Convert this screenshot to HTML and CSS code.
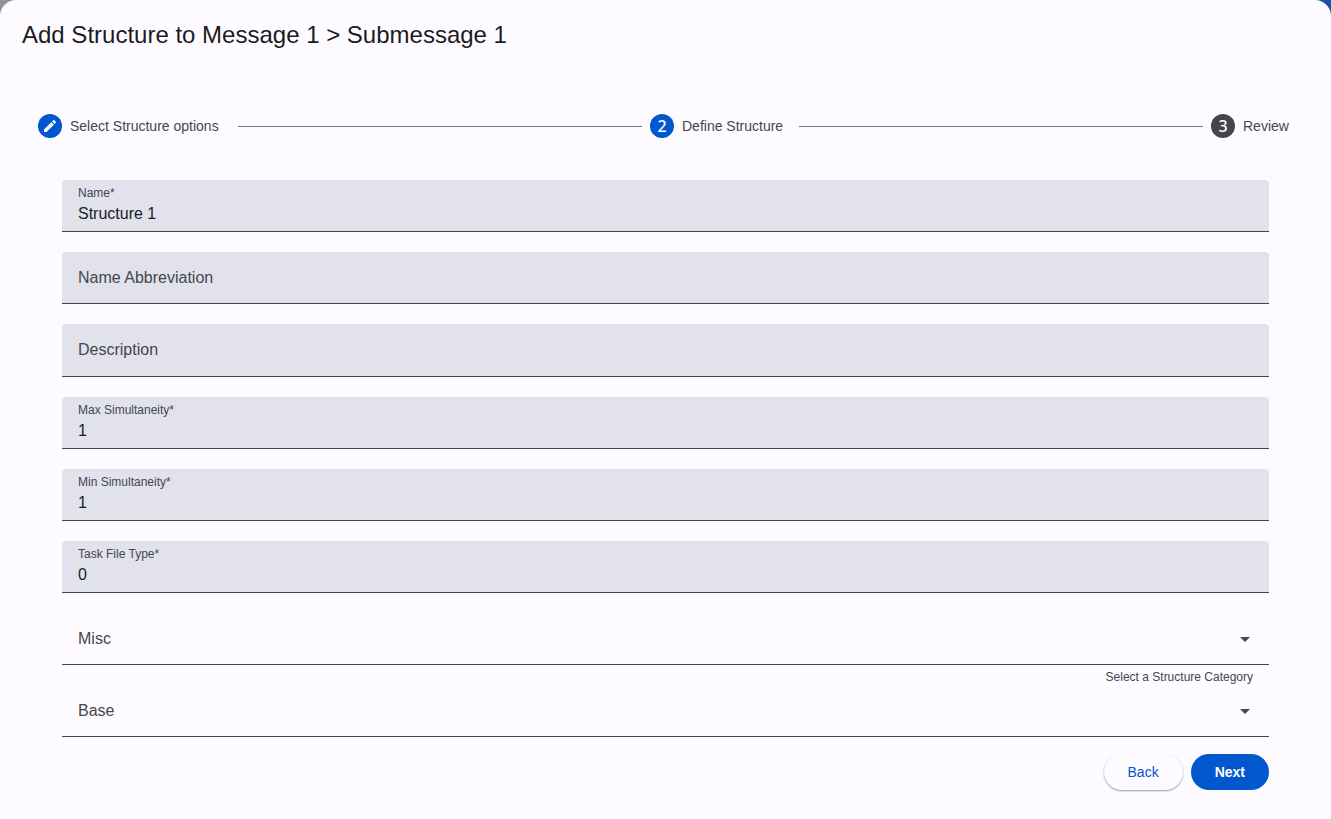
FILE: index.html
```html
<!DOCTYPE html>
<html lang="en">
<head>
  <meta charset="utf-8">
  <title>Add Structure</title>
  <link rel="stylesheet" href="styles.css">
</head>
<body>
  <main class="dialog">
    <h1 class="dialog-title">Add Structure to Message 1 &gt; Submessage 1</h1>

    <ol class="stepper">
      <li class="step">
        <span class="step-icon">
          <svg viewBox="0 0 24 24" width="16" height="16" aria-hidden="true"><path fill="currentColor" d="M3 17.250V21h3.750L17.810 9.940l-3.750-3.750L3 17.250zM20.710 7.040c.390-.390.390-1.020 0-1.410l-2.340-2.340c-.390-.390-1.020-.390-1.410 0l-1.830 1.830 3.750 3.750 1.830-1.830z"/></svg>
        </span>
        <span class="step-label step-label-long">Select Structure options</span>
      </li>
      <li class="step-line" aria-hidden="true"></li>
      <li class="step" aria-current="step">
        <span class="step-icon">2</span>
        <span class="step-label step-label-medium">Define Structure</span>
      </li>
      <li class="step-line" aria-hidden="true"></li>
      <li class="step">
        <span class="step-icon step-icon-pending">3</span>
        <span class="step-label step-label-short">Review</span>
      </li>
    </ol>

    <form class="form">
      <div class="field">
        <label class="field-label" for="name">Name*</label>
        <input class="field-input" id="name" type="text" value="Structure 1" required>
      </div>
      <div class="field">
        <input class="field-input" type="text" placeholder="Name Abbreviation" aria-label="Name Abbreviation">
      </div>
      <div class="field field-multiline">
        <textarea class="field-input" rows="1" placeholder="Description" aria-label="Description"></textarea>
      </div>
      <div class="field">
        <label class="field-label" for="max">Max Simultaneity*</label>
        <input class="field-input" id="max" type="text" inputmode="numeric" value="1" required>
      </div>
      <div class="field">
        <label class="field-label" for="min">Min Simultaneity*</label>
        <input class="field-input" id="min" type="text" inputmode="numeric" value="1" required>
      </div>
      <div class="field">
        <label class="field-label" for="task">Task File Type*</label>
        <input class="field-input" id="task" type="text" inputmode="numeric" value="0" required>
      </div>
      <div class="select-group">
        <div class="field field-select">
          <select class="field-input" aria-label="Misc" aria-describedby="misc-hint"><option>Misc</option></select>
          <svg class="arrow" viewBox="0 0 10 5" width="10" height="5" aria-hidden="true"><path d="M0 0h10L5 5z" fill="currentColor"/></svg>
        </div>
        <p class="hint" id="misc-hint">Select a Structure Category</p>
        <div class="field field-select">
          <select class="field-input" aria-label="Base"><option>Base</option></select>
          <svg class="arrow" viewBox="0 0 10 5" width="10" height="5" aria-hidden="true"><path d="M0 0h10L5 5z" fill="currentColor"/></svg>
        </div>
      </div>
      <div class="actions">
        <button class="button" type="button">Back</button>
        <button class="button button-primary" type="submit">Next</button>
      </div>
    </form>
  </main>
</body>
</html>
```
FILE: styles.css
```css
* {
  box-sizing: border-box;
}

body {
  margin: 0;
  min-height: 100vh;
  display: flex;
  background: linear-gradient(90deg, #919196 50%, #1a50a8 50%);
  color: #1b1b1f;
  font-family: "Liberation Sans", Arial, sans-serif;
}

.dialog {
  flex: 1;
  border-radius: 16px 16px 0 0;
  background: #fdfbff;
}

.dialog-title {
  margin: 0;
  padding: 19px 22px 0;
  font-size: 24px;
  font-weight: 400;
  line-height: 32px;
}

.stepper {
  display: flex;
  align-items: center;
  gap: 8px;
  margin: 0;
  padding: 63px 38px 0;
  list-style: none;
}

.step {
  display: flex;
  align-items: center;
  gap: 8px;
}

.step-icon {
  display: flex;
  align-items: center;
  justify-content: center;
  width: 24px;
  height: 24px;
  border-radius: 50%;
  background: #0057ce;
  color: #fff;
  font-family: "Noto Sans", sans-serif;
  font-size: 16px;
  font-weight: 500;
  line-height: 24px;
}

.step-icon-pending {
  background: #44464f;
}

.step-label {
  color: #44464f;
  font-size: 14px;
  white-space: nowrap;
}

.step-label-long {
  min-width: 160px;
}

.step-label-medium {
  min-width: 109px;
}

.step-label-short {
  min-width: 50px;
}

.step-line {
  flex: 1;
  height: 1px;
  background: #757780;
}

.form {
  display: flex;
  flex-direction: column;
  gap: 20px;
  padding: 42px 62px 28px;
}

.field {
  display: flex;
  flex-direction: column;
  justify-content: center;
  height: 52px;
  padding: 0 16px;
  border-bottom: 1px solid #44464f;
  border-radius: 4px 4px 0 0;
  background: #e1e2ec;
}

.field-multiline {
  height: 53px;
}

.field-label {
  color: #44464f;
  font-size: 12px;
  line-height: 14px;
  padding-bottom: 2px;
}

.field-input {
  width: 100%;
  height: 24px;
  padding: 0;
  border: 0;
  outline: 0;
  background: transparent;
  color: #1b1b1f;
  font: inherit;
  font-size: 16px;
  line-height: 24px;
  resize: none;
  appearance: none;
}

.field-input::placeholder {
  color: #44464f;
  opacity: 1;
}

.field-select {
  flex-direction: row;
  align-items: center;
  padding-right: 19px;
  background: transparent;
}

.field-select .field-input {
  flex: 1;
  color: #44464f;
}

.arrow {
  flex: none;
  margin-top: 2px;
  color: #44464f;
}

.hint {
  margin: 0;
  padding: 4px 16px 0;
  color: #44464f;
  font-size: 12px;
  line-height: 16px;
  text-align: right;
}

.actions {
  display: flex;
  justify-content: flex-end;
  gap: 8px;
  margin-top: -3px;
}

.button {
  height: 36px;
  padding: 0 24px;
  border: 0;
  border-radius: 18px;
  background: #fdfbff;
  box-shadow: 0 1px 2px rgba(0, 0, 0, 0.4);
  color: #0057ce;
  font: inherit;
  font-size: 14px;
}

.button-primary {
  background: #0057ce;
  box-shadow: none;
  color: #fff;
  font-weight: 700;
}
```
